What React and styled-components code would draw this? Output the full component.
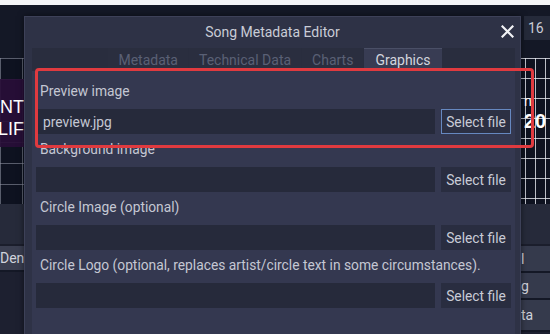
import React from "react";
import styled, { createGlobalStyle } from "styled-components";

const Global = createGlobalStyle`
  html, body { margin: 0; padding: 0; background: #141826; }
  body { font-family: Roboto, "Noto Sans", sans-serif; overflow: hidden; }
  * { box-sizing: border-box; }
`;

const Page = styled.div`
  position: relative;
  width: 550px;
  height: 334px;
  overflow: hidden;
  background: #141826;
  display: flex;
  flex-direction: column;
`;

const TopStrip = styled.div`
  height: 5px;
  background: #f4f5f7;
  flex: none;
`;

const AppBody = styled.div`
  flex: 1;
  display: flex;
  justify-content: space-between;
`;

const Pane = styled.div`
  width: ${(p) => p.$w}px;
  display: flex;
  flex-direction: column;
  overflow: hidden;
`;

const PaneHead = styled.div`
  height: 53px;
  flex: none;
  display: flex;
  justify-content: flex-end;
  padding-top: 11px;
`;

const Counter = styled.div`
  width: 26px;
  height: 24px;
  background: #252a3a;
  color: #c9ccd6;
  font-size: 14px;
  display: flex;
  align-items: center;
  padding-left: 4px;
`;

const Chart = styled.div`
  height: 146px;
  flex: none;
  display: flex;
  flex-direction: column;
  background-color: #0e1220;
  background-image:
    linear-gradient(to right, ${(p) => (p.$right ? "rgba(230,232,240,0.8)" : "rgba(150,154,170,0.55)")} 1px, transparent 1px),
    linear-gradient(to bottom, ${(p) => (p.$right ? "rgba(230,232,240,0.8)" : "rgba(150,154,170,0.55)")} 1px, transparent 1px);
  background-size: ${(p) => (p.$right ? "10px 20px" : "22px 21px")};
  background-position: ${(p) => (p.$right ? "5px 0" : "0 0")};
  color: #fff;
`;

const Band = styled.div`
  width: 100%;
  flex: ${(p) => (p.$h ? "none" : "1")};
  height: ${(p) => (p.$h ? `${p.$h}px` : "auto")};
  background: ${(p) => (p.$purple ? "rgba(40, 14, 56, 0.92)" : "transparent")};
  display: flex;
  flex-direction: column;
  justify-content: center;
  align-items: ${(p) => (p.$right ? "flex-start" : "flex-end")};
  padding-top: ${(p) => p.$pt || 0}px;
  font-size: ${(p) => (p.$right ? 20 : 18)}px;
  font-weight: ${(p) => (p.$right ? 700 : 400)};
  line-height: 22px;
  font-family: "Liberation Sans", Arial, sans-serif;
  padding-left: ${(p) => (p.$right ? 4 : 0)}px;
`;

const Gray = styled.div`
  height: 42px;
  flex: none;
  background: #262a3a;
  border-bottom: 2px solid #1b1e2c;
`;

const SideRow = styled.div`
  height: ${(p) => p.$h || 25}px;
  flex: none;
  background: ${(p) => p.$bg || "#353a4c"};
  color: #d0d3dc;
  font-size: 14px;
  display: flex;
  align-items: center;
  margin-bottom: 2px;
  padding-left: ${(p) => p.$pl || 0}px;
`;

const SideRest = styled.div`
  flex: 1;
  background: #1d2030;
`;

const Dialog = styled.div`
  position: absolute;
  left: 24px;
  top: 16px;
  width: 497px;
  bottom: -4px;
  background: #2e3246;
  border: 1px solid #3d4158;
  border-bottom: none;
  box-shadow: 0 0 6px rgba(0, 0, 0, 0.5);
  display: flex;
  flex-direction: column;
`;

const TitleBar = styled.div`
  height: 30px;
  flex: none;
  display: flex;
  align-items: center;
  justify-content: center;
  position: relative;
  color: #c9ccd6;
  font-size: 14px;
`;

const Close = styled.button`
  position: absolute;
  right: 5px;
  top: 6px;
  width: 16px;
  height: 16px;
  border: none;
  padding: 0;
  background: transparent;
  display: flex;
  align-items: center;
  justify-content: center;
`;

const TabWidget = styled.div`
  flex: 1;
  margin: 1px 5px 0 7px;
  display: flex;
  flex-direction: column;
`;

const TabStrip = styled.div`
  height: 23px;
  flex: none;
  background: #292d3e;
  display: flex;
  justify-content: center;
  padding-left: 4px;
`;

const Tab = styled.div`
  height: 23px;
  padding: 0 ${(p) => (p.$active ? 11 : 10)}px;
  margin-right: 1px;
  display: flex;
  align-items: center;
  font-size: 14px;
  color: ${(p) => (p.$active ? "#d3d5de" : "#5a6075")};
  background: ${(p) => (p.$active ? "#383c53" : "#2a2e3f")};
  border-top: 1px solid ${(p) => (p.$active ? "#4a4f66" : "transparent")};
`;

const Panel = styled.div`
  flex: 1;
  background: #343850;
  padding: 5px 4px 0 4px;
  display: flex;
  flex-direction: column;
`;

const Field = styled.div`
  display: flex;
  flex-direction: column;
`;

const Label = styled.div`
  height: 33px;
  display: flex;
  align-items: center;
  padding: 0 0 4px 4px;
  font-size: 13.8px;
  color: #c4c7d3;
  white-space: nowrap;
`;

const InputRow = styled.div`
  height: 25px;
  display: flex;
  gap: 6px;
`;

const Input = styled.div`
  flex: 1;
  background: #262a3b;
  color: #c4c7d3;
  font-size: 13.8px;
  display: flex;
  align-items: center;
  padding-left: 7px;
`;

const FileButton = styled.div`
  width: 70px;
  flex: none;
  background: ${(p) => (p.$focus ? "#2c3043" : "#292d40")};
  border: 1px solid ${(p) => (p.$focus ? "#6688c0" : "#292d40")};
  color: #c8cbd6;
  font-size: 13.8px;
  display: flex;
  align-items: center;
  justify-content: center;
`;

const Highlight = styled.div`
  position: absolute;
  left: 35px;
  top: 68px;
  width: 499px;
  height: 80px;
  border: 3px solid #e03a3f;
  border-radius: 4px;
  pointer-events: none;
`;

const fields = [
  { label: "Preview image", value: "preview.jpg", focus: true },
  { label: "Background image", value: "" },
  { label: "Circle Image (optional)", value: "" },
  { label: "Circle Logo (optional, replaces artist/circle text in some circumstances).", value: "" },
];

export default function App() {
  return (
    <>
      <Global />
      <Page>
        <TopStrip />
        <AppBody>
          <Pane $w={24}>
            <PaneHead />
            <Chart>
              <Band $h={21} />
              <Band $purple $h={68} $pt={10}>
                <span>NT</span>
                <span>LIF</span>
              </Band>
              <Band />
            </Chart>
            <Gray />
            <SideRow $bg="#3a3e50" $h={24}>Den</SideRow>
            <SideRest />
          </Pane>
          <Pane $w={30}>
            <PaneHead>
              <Counter>16</Counter>
            </PaneHead>
            <Chart $right>
              <Band $h={32} />
              <Band $right $h={44}>
                <span style={{ fontSize: 14, fontWeight: 400, lineHeight: "18px" }}>n</span>
                <span>20</span>
              </Band>
              <Band />
            </Chart>
            <Gray />
            <SideRow $pl={1}>l</SideRow>
            <SideRow $pl={1}>g</SideRow>
            <SideRow $pl={1} $h={30}>ta</SideRow>
            <SideRest />
          </Pane>
        </AppBody>

        <Dialog>
          <TitleBar>
            Song Metadata Editor
            <Close aria-label="close">
              <svg width="13" height="13" viewBox="0 0 13 13">
                <path d="M1.5 1.5 L11.5 11.5 M11.5 1.5 L1.5 11.5" stroke="#f2f3f6" strokeWidth="2.2" strokeLinecap="square" />
              </svg>
            </Close>
          </TitleBar>
          <TabWidget>
            <TabStrip>
              <Tab>Metadata</Tab>
              <Tab>Technical Data</Tab>
              <Tab>Charts</Tab>
              <Tab $active>Graphics</Tab>
            </TabStrip>
            <Panel>
              {fields.map((f) => (
                <Field key={f.label}>
                  <Label>{f.label}</Label>
                  <InputRow>
                    <Input>{f.value}</Input>
                    <FileButton $focus={f.focus}>Select file</FileButton>
                  </InputRow>
                </Field>
              ))}
            </Panel>
          </TabWidget>
        </Dialog>
        <Highlight />
      </Page>
    </>
  );
}
